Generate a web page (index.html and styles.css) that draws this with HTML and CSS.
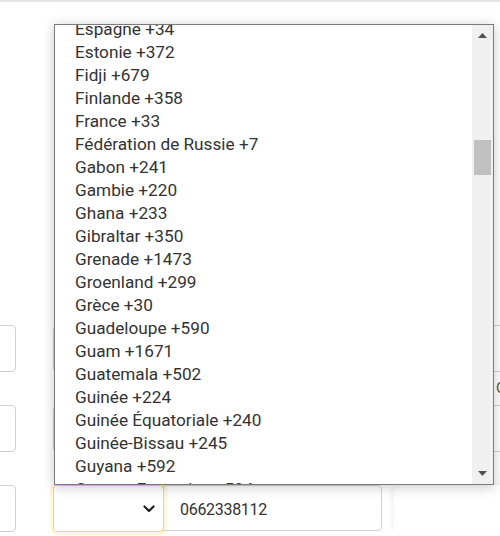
FILE: index.html
```html
<!DOCTYPE html>
<html lang="fr">
<head>
<meta charset="utf-8">
<title>Pays</title>
<link rel="stylesheet" href="styles.css">
</head>
<body>
<div class="topbar"></div>
<form class="form">
  <div class="row">
    <div class="field field-left"></div>
    <div class="field field-select"></div>
    <div class="field field-wide"></div>
  </div>
  <div class="hint">Confirmez</div>
  <div class="row">
    <div class="field field-left"></div>
    <div class="field field-select"></div>
    <div class="field field-wide"></div>
  </div>
  <div class="row row-last">
    <div class="field field-left"></div>
    <div class="field field-select focused">
      <svg class="chev" width="12" height="8" viewBox="0 0 12 8"><path d="M1.5 1.5 L6 6 L10.5 1.5" fill="none" stroke="#222" stroke-width="2.2" stroke-linecap="round" stroke-linejoin="round"/></svg>
    </div>
    <div class="field field-phone">0662338112</div>
    <div class="ghost"></div>
  </div>
</form>

<div class="popup">
  <ul class="options">
    <li>Espagne +34</li>
    <li>Estonie +372</li>
    <li>Fidji +679</li>
    <li>Finlande +358</li>
    <li>France +33</li>
    <li>Fédération de Russie +7</li>
    <li>Gabon +241</li>
    <li>Gambie +220</li>
    <li>Ghana +233</li>
    <li>Gibraltar +350</li>
    <li>Grenade +1473</li>
    <li>Groenland +299</li>
    <li>Grèce +30</li>
    <li>Guadeloupe +590</li>
    <li>Guam +1671</li>
    <li>Guatemala +502</li>
    <li>Guinée +224</li>
    <li>Guinée Équatoriale +240</li>
    <li>Guinée-Bissau +245</li>
    <li>Guyana +592</li>
    <li>Guyane Française +594</li>
  </ul>
  <div class="scrollbar">
    <div class="sb-btn"><svg width="9" height="5" viewBox="0 0 9 5"><polygon points="0,5 4.5,0 9,5" fill="#505050"/></svg></div>
    <div class="sb-track"><div class="sb-thumb"></div></div>
    <div class="sb-btn"><svg width="9" height="5" viewBox="0 0 9 5"><polygon points="0,0 4.5,5 9,0" fill="#505050"/></svg></div>
  </div>
</div>
</body>
</html>
```

FILE: styles.css
```css
* { box-sizing: border-box; }
html, body { margin: 0; padding: 0; background: #fff; }
body {
  font-family: "Roboto", "Liberation Sans", sans-serif;
  color: #333;
  width: 500px;
  height: 536px;
  overflow: hidden;
  position: relative;
}
.topbar {
  height: 2px;
  background: #e4e4e4;
}
.form {
  display: flex;
  flex-direction: column;
  padding-top: 323px;
}
.row {
  display: flex;
  align-items: flex-start;
  height: 47px;
}
.hint {
  height: 33px;
  padding-left: 496px;
  padding-top: 9px;
  font-size: 15px;
  line-height: 15px;
  color: #555;
  white-space: nowrap;
}
.row + .hint + .row { margin-bottom: 33px; }
.field {
  flex-shrink: 0;
  height: 47px;
  border: 1px solid #d2d2d2;
  background: #fff;
  border-radius: 4px;
}
.field-left {
  width: 40px;
  margin-left: -24px;
  margin-right: 37px;
}
.field-select {
  width: 111px;
  border-radius: 4px 0 0 4px;
  display: flex;
  align-items: center;
  justify-content: flex-end;
  padding-right: 8px;
}
.field-wide {
  width: 360px;
  margin-left: -1px;
  border-radius: 0 4px 4px 0;
}
.focused {
  border: 1px solid #f0d67a;
  border-radius: 4px;
  box-shadow: 0 0 0 3px rgba(250, 225, 120, 0.28);
  position: relative;
  z-index: 1;
}
.chev { display: block; }
.field-phone {
  width: 219px;
  margin-left: -1px;
  height: 46px;
  border-radius: 0 4px 4px 0;
  padding-left: 16px;
  font-size: 16px;
  letter-spacing: -0.3px;
  line-height: 48px;
  color: #333;
}
.ghost {
  flex-shrink: 0;
  margin-left: 12px;
  width: 120px;
  height: 47px;
  border-radius: 8px 0 0 0;
  background: #fff;
  box-shadow: -2px -2px 6px rgba(0, 0, 0, 0.06);
}

.popup {
  position: absolute;
  left: 54px;
  top: 24px;
  width: 440px;
  height: 461px;
  border: 1px solid #7a7a7a;
  background: #fff;
  box-shadow: 0 2px 12px rgba(0, 0, 0, 0.22);
  display: flex;
  overflow: hidden;
  z-index: 5;
}
.options {
  list-style: none;
  margin: -7px 0 0 0;
  padding: 0;
  flex: 1;
}
.options li {
  height: 23px;
  line-height: 23px;
  padding-left: 20px;
  font-size: 17.2px;
  color: #333;
  white-space: nowrap;
}
.scrollbar {
  width: 21px;
  background: #f0f0f0;
  display: flex;
  flex-direction: column;
}
.sb-btn {
  height: 21px;
  display: flex;
  align-items: center;
  justify-content: center;
}
.sb-btn svg { display: block; }
.sb-track { flex: 1; }
.sb-thumb {
  margin: 94px 0 0 2px;
  width: 17px;
  height: 35px;
  background: #c1c1c1;
}
```
